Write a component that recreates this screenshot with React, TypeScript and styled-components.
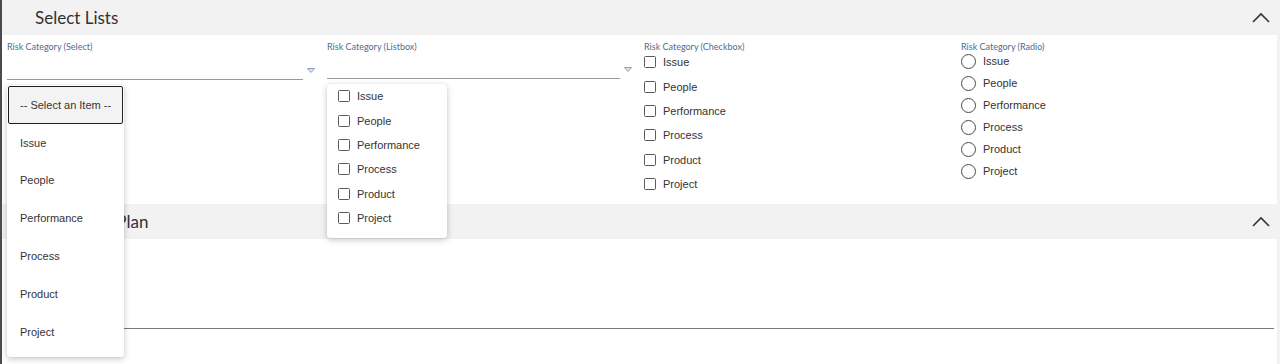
import styled, { createGlobalStyle } from 'styled-components';

const options = ['Issue', 'People', 'Performance', 'Process', 'Product', 'Project'];

const GlobalStyle = createGlobalStyle`
  body {
    margin: 0;
    background: #ffffff;
    font-family: 'Liberation Sans', Arial, sans-serif;
  }
`;

const Page = styled.div`
  position: relative;
  border-left: 2px solid #4b4b4b;
  min-height: 364px;
  box-sizing: border-box;
  overflow: hidden;
`;

const Header = styled.div`
  display: flex;
  align-items: center;
  justify-content: space-between;
  height: 35px;
  padding: 0 10px 0 33px;
  background: #f2f2f2;
  box-sizing: border-box;
`;

const Title = styled.h2`
  margin: 0;
  font-family: Lato, 'Open Sans', sans-serif;
  font-size: 17px;
  font-weight: 400;
  color: #323130;
`;

const Body = styled.div<{ $height: number }>`
  height: ${(p) => p.$height}px;
  background: #ffffff;
  border-right: 3px solid #f2f2f2;
  box-sizing: border-box;
`;

const Grid = styled.div`
  display: grid;
  grid-template-columns: 320px 317px 317px 1fr;
  padding: 7px 0 8px 5px;
`;

const Field = styled.div`
  display: flex;
  flex-direction: column;
  padding-right: 12px;
`;

const Label = styled.label`
  font-family: Lato, 'Open Sans', sans-serif;
  font-size: 9px;
  line-height: 10px;
  color: #4f6d90;
`;

const InputRow = styled.div`
  position: relative;
  display: flex;
  align-items: flex-end;
`;

const Underline = styled.div<{ $height: number }>`
  flex: 1;
  height: ${(p) => p.$height}px;
  border-bottom: 1.5px solid #9a9a9a;
`;

const Caret = styled.svg`
  flex: none;
  margin: 0 0 7px 4px;
`;

const Popup = styled.div<{ $top: number }>`
  position: absolute;
  top: calc(100% + ${(p) => p.$top}px);
  left: 0;
  z-index: 5;
  background: #ffffff;
  border-radius: 3px;
  box-shadow: 0 2px 6px rgba(0, 0, 0, 0.22), 0 0 1px rgba(0, 0, 0, 0.15);
`;

const SelectMenu = styled(Popup)`
  width: 117px;
  padding: 1px 1px 6px;
  box-sizing: border-box;
`;

const MenuItem = styled.div<{ $active?: boolean }>`
  display: flex;
  align-items: center;
  height: 37.8px;
  padding-left: ${(p) => (p.$active ? 11 : 12)}px;
  font-size: 11px;
  color: #333333;
  border-radius: 2px;
  box-sizing: border-box;
  background: ${(p) => (p.$active ? '#f3f3f3' : 'transparent')};
  border: ${(p) => (p.$active ? '1.5px solid #1f1f1f' : 'none')};
`;

const ListMenu = styled(Popup)`
  width: 120px;
  padding: 2px 0 8px 11px;
  box-sizing: border-box;
`;

const OptionList = styled.div<{ $step: number }>`
  display: flex;
  flex-direction: column;
  margin-top: -2px;

  & > * {
    height: ${(p) => p.$step}px;
  }
`;

const Option = styled.div`
  display: flex;
  align-items: center;
  gap: 7px;
  font-size: 11px;
  color: #333333;
`;

const Box = styled.span`
  width: 12px;
  height: 12px;
  border: 1.5px solid #5a5a5a;
  border-radius: 1.5px;
  box-sizing: border-box;
  flex: none;
`;

const Circle = styled.span`
  width: 15px;
  height: 15px;
  border: 1.5px solid #4a4a4a;
  border-radius: 50%;
  box-sizing: border-box;
  flex: none;
`;

const TextField = styled.div`
  display: flex;
  flex-direction: column;
  padding: 7px 3px 0 5px;
`;

const TextArea = styled.div`
  height: 72px;
  border-bottom: 1.5px solid #7a7a7a;
`;

const Chevron = () => (
  <svg width="18" height="11" viewBox="0 0 18 11">
    <path d="M1 10 L9 2 L17 10" fill="none" stroke="#333" strokeWidth="1.6" />
  </svg>
);

const DownCaret = () => (
  <Caret width="8" height="5" viewBox="0 0 8 5">
    <path d="M0.5 0.5 H7.5 L4 4.5 Z" fill="#dde4ee" stroke="#8ea2bb" strokeWidth="1" />
  </Caret>
);

const App = () => {
  return (
    <>
      <GlobalStyle />
      <Page>
        <Header>
          <Title>Select Lists</Title>
          <Chevron />
        </Header>
        <Body $height={169}>
          <Grid>
            <Field>
              <Label>Risk Category (Select)</Label>
              <InputRow>
                <Underline $height={27} />
                <DownCaret />
                <SelectMenu $top={5}>
                  <MenuItem $active>-- Select an Item --</MenuItem>
                  {options.map((o) => (
                    <MenuItem key={o}>{o}</MenuItem>
                  ))}
                </SelectMenu>
              </InputRow>
            </Field>

            <Field>
              <Label>Risk Category (Listbox)</Label>
              <InputRow>
                <Underline $height={26} />
                <DownCaret />
                <ListMenu $top={5}>
                  <OptionList $step={24.4}>
                    {options.map((o) => (
                      <Option key={o}>
                        <Box />
                        {o}
                      </Option>
                    ))}
                  </OptionList>
                </ListMenu>
              </InputRow>
            </Field>

            <Field>
              <Label>Risk Category (Checkbox)</Label>
              <OptionList $step={24.4}>
                {options.map((o) => (
                  <Option key={o}>
                    <Box />
                    {o}
                  </Option>
                ))}
              </OptionList>
            </Field>

            <Field>
              <Label>Risk Category (Radio)</Label>
              <OptionList $step={22}>
                {options.map((o) => (
                  <Option key={o}>
                    <Circle />
                    {o}
                  </Option>
                ))}
              </OptionList>
            </Field>
          </Grid>
        </Body>

        <Header>
          <Title>Mitigation Plan</Title>
          <Chevron />
        </Header>
        <Body $height={125}>
          <TextField>
            <Label>Mitigation Plan</Label>
            <TextArea />
          </TextField>
        </Body>
      </Page>
    </>
  );
};

export default App;
